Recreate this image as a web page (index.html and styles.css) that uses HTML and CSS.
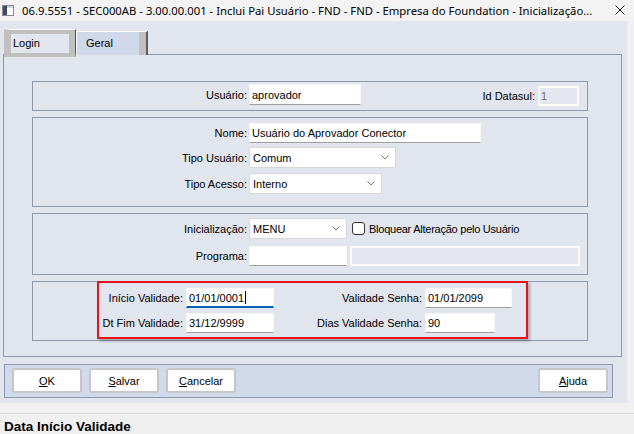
FILE: index.html
```html
<!DOCTYPE html>
<html lang="pt-BR">
<head>
  <meta charset="UTF-8" />
  <title>Inclui Pai Usuário</title>
  <link rel="stylesheet" href="styles.css">
</head>
<body>

  <div class="titlebar">
    <svg class="app-icon" width="12" height="11" viewBox="0 0 12 11">
      <rect x="0.5" y="0.5" width="11" height="10" fill="#fff" stroke="#8a8a8a"/>
      <rect x="1" y="1" width="4" height="9" fill="#3c4d63"/>
      <rect x="5" y="1" width="6" height="2" fill="#c9d3e2"/>
    </svg>
    <span class="title">06.9.5551 - SEC000AB - 3.00.00.001 - Inclui Pai Usuário - FND - FND - Empresa do Foundation - Inicialização...</span>
    <svg class="close" width="10" height="10" viewBox="0 0 10 10">
      <path d="M0.5 0.5 L9.5 9.5 M9.5 0.5 L0.5 9.5" stroke="#1a1a1a" stroke-width="1" fill="none"/>
    </svg>
  </div>

  <div class="client">
    <div class="window">
      <div class="tabs">
        <div class="tab tab-login">Login</div>
        <div class="tab tab-geral">Geral</div>
      </div>

      <div class="tab-panel">
        <div class="group group-user">
          <div class="field">
            <span class="label">Usuário:</span>
            <div class="input w-user">aprovador</div>
          </div>
          <div class="field field-id">
            <span class="label-inline">Id Datasul:</span>
            <div class="input disabled w-id">1</div>
          </div>
        </div>

        <div class="group group-name">
          <div class="field">
            <span class="label">Nome:</span>
            <div class="input w-name">Usuário do Aprovador Conector</div>
          </div>
          <div class="field">
            <span class="label">Tipo Usuário:</span>
            <div class="select w-tipo">Comum
              <svg width="8" height="5" viewBox="0 0 8 5"><path d="M0.5 0.5 L4 4 L7.5 0.5" stroke="#777" fill="none"/></svg>
            </div>
          </div>
          <div class="field field-acesso">
            <span class="label">Tipo Acesso:</span>
            <div class="select w-acesso">Interno
              <svg width="8" height="5" viewBox="0 0 8 5"><path d="M0.5 0.5 L4 4 L7.5 0.5" stroke="#777" fill="none"/></svg>
            </div>
          </div>
        </div>

        <div class="group group-init">
          <div class="field">
            <span class="label">Inicialização:</span>
            <div class="select w-init">MENU
              <svg width="8" height="5" viewBox="0 0 8 5"><path d="M0.5 0.5 L4 4 L7.5 0.5" stroke="#777" fill="none"/></svg>
            </div>
            <span class="checkbox"></span>
            <span class="check-label">Bloquear Alteração pelo Usuário</span>
          </div>
          <div class="field">
            <span class="label">Programa:</span>
            <div class="input w-init"></div>
            <div class="input disabled w-prog"></div>
          </div>
        </div>

        <div class="group group-valid">
          <div class="highlight">
            <span class="label-grid">Início Validade:</span>
            <div class="input focused">01/01/0001<span class="caret"></span></div>
            <span class="label-grid">Validade Senha:</span>
            <div class="input">01/01/2099</div>
            <span class="label-grid">Dt Fim Validade:</span>
            <div class="input">31/12/9999</div>
            <span class="label-grid">Dias Validade Senha:</span>
            <div class="input w-dias">90</div>
          </div>
        </div>
      </div>

      <div class="button-bar">
        <button class="btn"><u>O</u>K</button>
        <button class="btn"><u>S</u>alvar</button>
        <button class="btn"><u>C</u>ancelar</button>
        <button class="btn btn-help"><u>A</u>juda</button>
      </div>
    </div>
    <div class="side"></div>
  </div>

  <div class="status">Data Início Validade</div>

</body>
</html>
```

FILE: styles.css
```css
:root {
  --panel: #e1e5ee;
  --frame: #8c99ad;
  --bar: #d1daeb;
  --tab-gray: #c0c0c0;
}

* {
  box-sizing: border-box;
}

body {
  margin: 0;
  width: 634px;
  height: 434px;
  overflow: hidden;
  background: #f0f0f0;
  font-family: 'Liberation Sans', Arial, sans-serif;
  font-size: 11px;
  color: #000;
}

/* title bar */
.titlebar {
  height: 21px;
  display: flex;
  align-items: center;
  background: #f3f3f3;
  font-family: 'Noto Sans', sans-serif;
  font-size: 11.3px;
}

.app-icon {
  flex: none;
  margin: 0 8px 1px 2px;
}

.title {
  flex: 1;
  min-width: 0;
  white-space: nowrap;
}

.close {
  flex: none;
  margin: 0 9px 1px 0;
}

/* window body */
.client {
  display: flex;
  height: 382px;
}

.window {
  width: 627px;
  background: var(--panel);
  padding: 0 5px 0 3px;
}

.side {
  flex: 1;
}

.tabs {
  display: flex;
  align-items: flex-start;
  height: 33px;
  padding: 8px 0 0 1px;
  position: relative;
  z-index: 1;
}

.tab {
  display: flex;
  align-items: center;
}

.tab-login {
  width: 72px;
  height: 28px;
  background: var(--panel);
  border-style: solid;
  border-width: 1px 1px 4px 7px;
  border-color: #fff #4f4f4f var(--tab-gray) var(--tab-gray);
  box-shadow: inset -6px 4px 0 var(--tab-gray);
  padding: 2px 0 0 2px;
}

.tab-geral {
  width: 72px;
  height: 24px;
  margin-top: 2px;
  background: #d0d9ea;
  border-top: 1px solid #fff;
  border-left: 1px solid #fff;
  border-right: 2px solid #5e5e5e;
  box-shadow: inset -7px 0 0 var(--tab-gray);
  padding: 0 0 2px 9px;
}

.tab-panel {
  width: 619px;
  height: 303px;
  border: 1px solid var(--frame);
  padding: 26px 33px 0 28px;
  display: flex;
  flex-direction: column;
  gap: 6px;
}

.group {
  border: 1px solid var(--frame);
}

.group-user {
  height: 30px;
  display: flex;
  align-items: flex-start;
  padding-top: 2px;
}

.group-name {
  height: 90px;
  display: flex;
  flex-direction: column;
  gap: 4px;
  padding-top: 5px;
}

.group-init {
  height: 62px;
  display: flex;
  flex-direction: column;
  gap: 7px;
  padding-top: 4px;
}

.group-valid {
  height: 60px;
  padding-left: 64px;
}

.field {
  display: flex;
  align-items: center;
}

.field-id {
  margin: 2px 8px 0 auto;
}

.field-acesso {
  margin-top: 1px;
}

.label {
  width: 216px;
  padding-right: 2px;
  text-align: right;
  white-space: nowrap;
}

.label-inline {
  margin-right: 3px;
}

.check-label {
  letter-spacing: -0.25px;
  white-space: nowrap;
}

.input {
  height: 20px;
  display: flex;
  align-items: center;
  padding: 0 2px;
  background: #fff;
  border: 1px solid #f7f7f7;
  border-bottom-color: #9e9e9e;
  white-space: nowrap;
}

.input.disabled {
  background: #e4e7ef;
  border: 2px solid #fbfbfb;
  color: #6d6d6d;
  padding-left: 1px;
}

.input.focused {
  border-bottom: 2px solid #0061b6;
}

.caret {
  width: 1px;
  height: 13px;
  margin-left: 1px;
  background: #000;
}

.select {
  height: 21px;
  display: flex;
  align-items: center;
  justify-content: space-between;
  padding: 0 6px 0 3px;
  background: #fff;
  border: 1px solid #d8d8d8;
  border-radius: 2px;
}

.w-user { width: 112px; height: 21px; }
.w-id { width: 41px; }
.w-name { width: 232px; }
.w-tipo { width: 147px; }
.w-acesso { width: 133px; }
.w-init { width: 98px; }
.w-prog { width: 230px; margin-left: 3px; }
.w-dias { width: 70px; }

.checkbox {
  width: 13px;
  height: 13px;
  margin: 0 4px 0 5px;
  border: 1px solid #333;
  border-radius: 3px;
  background: #fff;
}

/* highlighted date block */
.highlight {
  width: 431px;
  height: 58px;
  margin-top: -1px;
  border: 2px solid #e8141c;
  box-shadow: 2px 2px 3px rgba(0, 0, 0, 0.28);
  display: grid;
  grid-template-columns: 87px 88px 151px 87px;
  grid-auto-rows: 20px;
  row-gap: 5px;
  padding-top: 5px;
  align-items: center;
}

.label-grid {
  text-align: right;
  padding-right: 3px;
  white-space: nowrap;
}

/* bottom buttons */
.button-bar {
  width: 609px;
  height: 34px;
  margin: 7px 0 0 1px;
  background: var(--bar);
  border: 1px solid var(--frame);
  padding: 3px 4px 0 7px;
  display: flex;
  align-items: flex-start;
  gap: 7px;
}

.btn {
  width: 70px;
  height: 25px;
  background: #fff;
  border: 2px solid #c6c6c6;
  border-radius: 3px;
  font-family: inherit;
  font-size: 11px;
  color: #000;
  padding: 0;
}

.btn-help {
  margin-left: auto;
}

.status {
  margin-top: 10px;
  border-top: 1px solid #dadada;
  padding: 4px 4px 0;
  font-size: 13.5px;
  font-weight: bold;
  line-height: 17px;
}
```
